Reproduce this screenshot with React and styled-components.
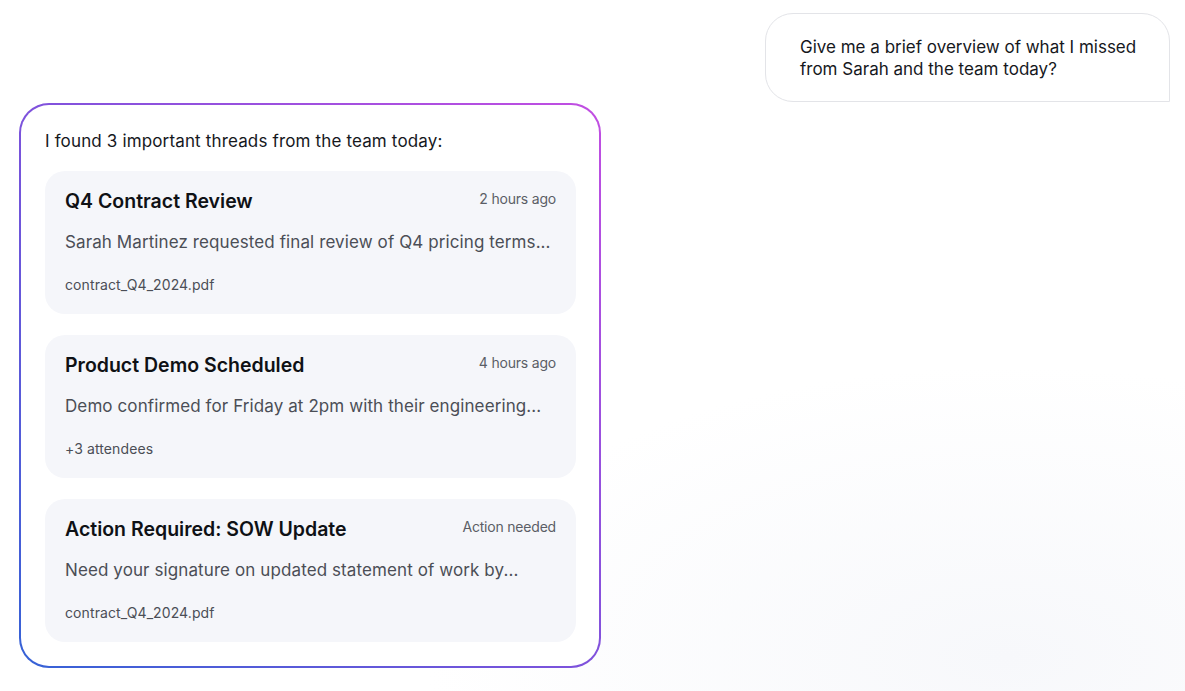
import styled, { createGlobalStyle } from "styled-components";

const GlobalStyle = createGlobalStyle`
    html, body {
        margin: 0;
        padding: 0;
        background: #ffffff;
    }
    body {
        font-family: Inter, "Noto Sans", sans-serif;
        color: #111318;
    }
`

const Page = styled.div`
    display: flex;
    flex-direction: column;
    min-height: 691px;
    padding: 13px 15px 0 19px;
    box-sizing: border-box;
    background: radial-gradient(ellipse 70% 60% at 85% 95%, #f7f8fb 0%, #ffffff 70%);
`
const UserBubble = styled.div`
    align-self: flex-end;
    width: 405px;
    box-sizing: border-box;
    padding: 22px 26px 21px 34px;
    border: 1px solid #e3e4e8;
    border-radius: 28px 28px 0 28px;
    background: #fff;
    font-size: 17px;
    line-height: 22px;
    color: #16181d;
`
const ReplyCard = styled.div`
    width: 582px;
    box-sizing: border-box;
    margin-top: 1px;
    padding: 24px 23px 24px 24px;
    border: 2px solid transparent;
    border-radius: 30px;
    background:
        linear-gradient(#fff, #fff) padding-box,
        linear-gradient(45deg, #3562d6 0%, #7f52dc 50%, #c24ee2 100%) border-box;
    display: flex;
    flex-direction: column;
    gap: 18px;
`
const Intro = styled.div`
    font-size: 17px;
    line-height: 24px;
    color: #16181d;
    letter-spacing: 0.15px;
`
const ThreadList = styled.div`
    display: flex;
    flex-direction: column;
    gap: 21px;
`
const Thread = styled.div`
    background: #f5f6fa;
    border-radius: 20px;
    padding: 16px 20px 19px 20px;
    display: flex;
    flex-direction: column;
`
const ThreadHead = styled.div`
    display: flex;
    justify-content: space-between;
    align-items: flex-start;
`
const ThreadTitle = styled.div`
    font-size: 19.5px;
    line-height: 28px;
    font-weight: 600;
    color: #0f1115;
`
const ThreadMeta = styled.div`
    font-size: 14px;
    line-height: 24px;
    color: #5b5e66;
    letter-spacing: -0.2px;
`
const ThreadText = styled.div`
    margin-top: 15px;
    font-size: 17px;
    line-height: 24px;
    color: #4b4e56;
    letter-spacing: 0.1px;
`
const ThreadFoot = styled.div`
    margin-top: 21px;
    font-size: 14px;
    line-height: 20px;
    color: #4b4e56;
    letter-spacing: 0.1px;
`

const threads = [
    {
        title: "Q4 Contract Review",
        meta: "2 hours ago",
        text: "Sarah Martinez requested final review of Q4 pricing terms...",
        foot: "contract_Q4_2024.pdf",
    },
    {
        title: "Product Demo Scheduled",
        meta: "4 hours ago",
        text: "Demo confirmed for Friday at 2pm with their engineering...",
        foot: "+3 attendees",
    },
    {
        title: "Action Required: SOW Update",
        meta: "Action needed",
        text: "Need your signature on updated statement of work by...",
        foot: "contract_Q4_2024.pdf",
    },
]

export default function App() {
    return (
        <>
            <GlobalStyle />
            <Page>
                <UserBubble>
                    Give me a brief overview of what I missed from Sarah and the team today?
                </UserBubble>
                <ReplyCard>
                    <Intro>I found 3 important threads from the team today:</Intro>
                    <ThreadList>
                        {threads.map((t) => (
                            <Thread key={t.title}>
                                <ThreadHead>
                                    <ThreadTitle>{t.title}</ThreadTitle>
                                    <ThreadMeta>{t.meta}</ThreadMeta>
                                </ThreadHead>
                                <ThreadText>{t.text}</ThreadText>
                                <ThreadFoot>{t.foot}</ThreadFoot>
                            </Thread>
                        ))}
                    </ThreadList>
                </ReplyCard>
            </Page>
        </>
    )
}
